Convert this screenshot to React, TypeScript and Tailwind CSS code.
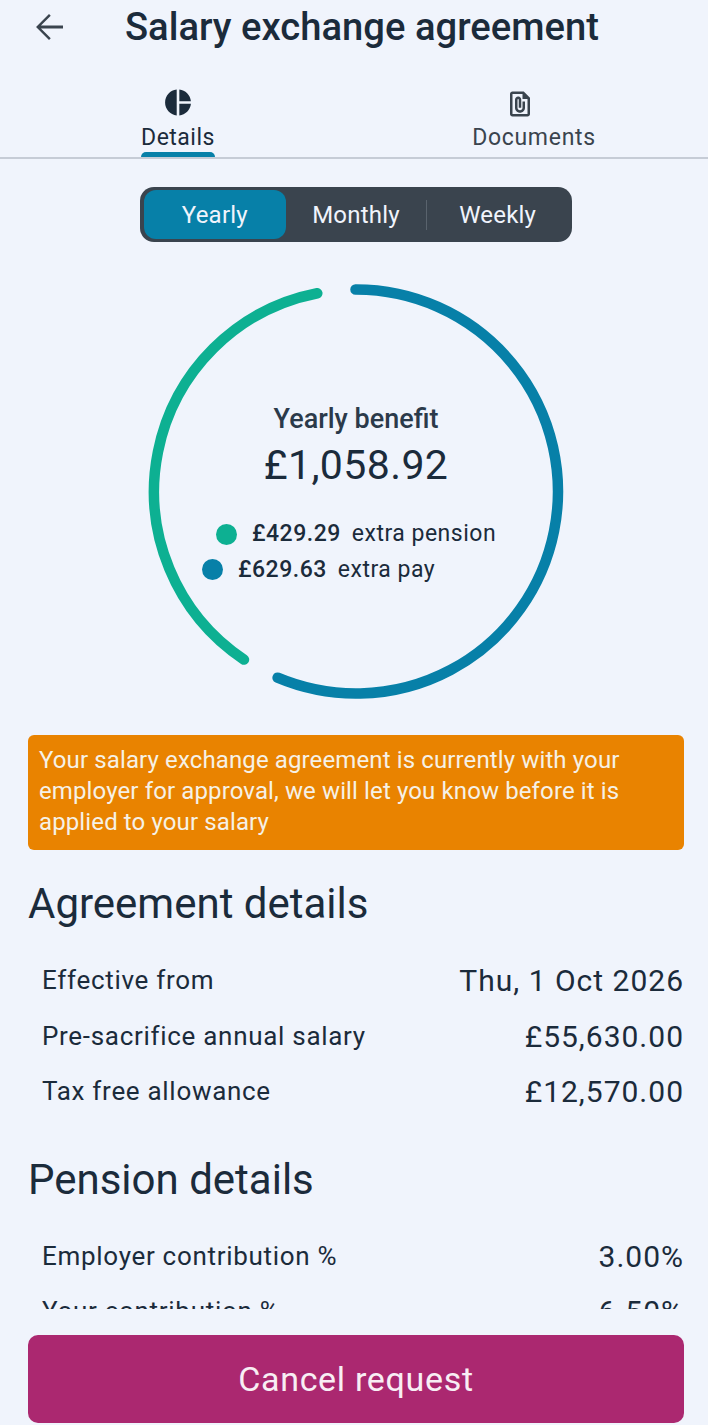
import React from 'react';

const agreementRows = [
  { label: 'Effective from', value: 'Thu, 1 Oct 2026' },
  { label: 'Pre-sacrifice annual salary', value: '£55,630.00' },
  { label: 'Tax free allowance', value: '£12,570.00' },
];

const pensionRows = [
  { label: 'Employer contribution %', value: '3.00%' },
  { label: 'Your contribution %', value: '6.50%' },
  { label: 'Total contribution %', value: '9.50%' },
];

function DetailRow({ label, value }: { label: string; value: string }) {
  return (
    <div className="flex h-[55.5px] items-center justify-between pl-[14px]">
      <span className="text-[26px] tracking-[0.7px] text-[#1b2b3b]">{label}</span>
      <span className="text-[30px] tracking-[1px] text-[#1b2b3b]">{value}</span>
    </div>
  );
}

function BenefitRing() {
  return (
    <svg width="432" height="432" viewBox="0 0 432 432" className="absolute left-0 top-0">
      <path d="M177.29 17.25 A202 202 0 0 0 103.95 383.57" fill="none" stroke="#0db092" strokeWidth="10.5" strokeLinecap="round" />
      <path d="M215.5 13.5 A202 202 0 1 1 137.62 401.69" fill="none" stroke="#0780a8" strokeWidth="10.5" strokeLinecap="round" />
    </svg>
  );
}

export default function App() {
  return (
    <div className="flex h-[1425px] w-[708px] flex-col overflow-hidden bg-[#f0f4fc] font-['Roboto',sans-serif] text-[#1b2b3b]">
      <header className="flex h-[54px] shrink-0 items-center">
        <svg width="42" height="42" viewBox="0 0 24 24" fill="#3a444e" className="ml-[28px]">
          <path d="M20 11.2H7.4l5.6-5.6L12 4.6 4.6 12l7.4 7.4 1-1-5.6-5.6H20v-1.6z" />
        </svg>
        <h1 className="ml-[55px] whitespace-nowrap text-[38.2px] font-medium leading-none">Salary exchange agreement</h1>
      </header>

      <nav className="flex h-[105px] shrink-0 border-b-2 border-[#c6ccd6]">
        <div className="flex w-[356px] shrink-0 flex-col items-center pt-[35px]">
          <svg width="32" height="32" viewBox="0 0 24 24" fill="#1b2b3b" className="-mt-[2px] mb-[5px]">
            <path d="M11 2v20c-5.07-.5-9-4.79-9-10s3.93-9.5 9-10zm2.03 0v8.99H22c-.47-4.74-4.24-8.52-8.97-8.99zm0 11.01V22c4.74-.47 8.5-4.25 8.97-8.99h-8.97z" />
          </svg>
          <span className="text-[23px] leading-[30px] tracking-[0.5px]">Details</span>
          <span className="-mt-[1px] h-[5px] w-[74px] shrink-0 rounded-t-[5px] bg-[#0780a8]" />
        </div>
        <div className="flex w-[356px] shrink-0 flex-col items-center pt-[35px]">
          <svg width="30" height="30" viewBox="0 0 24 24" fill="#3a444e" className="-ml-[29px]">
            <path d="M15 2H6c-1.1 0-2 .9-2 2v16c0 1.1.9 2 2 2h12c1.1 0 2-.9 2-2V7l-5-5zM6 20V4h8v4h4v12H6zm10-10v5c0 2.21-1.79 4-4 4s-4-1.79-4-4V8.5c0-1.47 1.26-2.64 2.76-2.49 1.3.13 2.24 1.32 2.24 2.63V15h-2V8.5c0-.28-.22-.5-.5-.5s-.5.22-.5.5V15c0 1.1.9 2 2 2s2-.9 2-2v-5h2z" />
          </svg>
          <span className="mt-[4px] text-[23px] leading-[30px] tracking-[0.7px] text-[#3a444e]">Documents</span>
        </div>
      </nav>

      <main className="h-[1150px] shrink-0 overflow-hidden pl-[28px] pr-[24px]">
        <div className="ml-[112px] mt-[28px] flex h-[55px] w-[432px] items-center rounded-[14px] bg-[#3a444e] px-[4px] text-[24px] tracking-[0.2px] text-[#f0f4fc]">
          <div className="flex h-[49px] w-[142px] items-center justify-center rounded-[12px] bg-[#0780a8]">Yearly</div>
          <div className="flex w-[141px] items-center justify-center">Monthly</div>
          <div className="h-[30px] w-[1px] bg-[#59636d]" />
          <div className="flex w-[141px] items-center justify-center">Weekly</div>
        </div>

        <div className="relative ml-[112px] mt-[34px] h-[432px] w-[432px]">
          <BenefitRing />
          <div className="relative flex flex-col items-center pt-[126px]">
            <span className="text-[27px] font-medium leading-[34px] text-[#2b3a4a]">Yearly benefit</span>
            <span className="mt-[1px] text-[41px] leading-[56px] tracking-[0.4px]">£1,058.92</span>
          </div>
          <div className="relative mt-[28px] flex flex-col gap-[9.5px] text-[23px] leading-[26px] tracking-[0.5px]">
            <div className="ml-[76px] flex items-center">
              <span className="h-[21px] w-[21px] rounded-full bg-[#0db092]" />
              <span className="ml-[15px] font-medium">£429.29</span>
              <span className="ml-[11px]">extra pension</span>
            </div>
            <div className="ml-[62px] flex items-center">
              <span className="h-[21px] w-[21px] rounded-full bg-[#0780a8]" />
              <span className="ml-[15px] font-medium">£629.63</span>
              <span className="ml-[11px]">extra pay</span>
            </div>
          </div>
        </div>

        <div className="mt-[27px] h-[115px] rounded-[6px] bg-[#e98300] px-[11px] pt-[10px] text-[24px] leading-[31px] tracking-[0.12px] text-[#f6f1e6]">
          Your salary exchange agreement is currently with your employer for approval, we will let you know before it is applied to your salary
        </div>

        <h2 className="mt-[27px] text-[42px] leading-[54px]">Agreement details</h2>
        <div className="mt-[22px]">
          {agreementRows.map((row) => (
            <DetailRow key={row.label} label={row.label} value={row.value} />
          ))}
        </div>

        <h2 className="mt-[33px] text-[42px] leading-[54px]">Pension details</h2>
        <div className="mt-[22px]">
          {pensionRows.map((row) => (
            <DetailRow key={row.label} label={row.label} value={row.value} />
          ))}
        </div>
      </main>

      <div className="px-[24px] pt-[26px]">
        <button className="ml-[4px] flex h-[88px] w-[656px] items-center justify-center rounded-[10px] bg-[#ab2870] text-[34px] tracking-[0.7px] text-[#f8eef4]">
          Cancel request
        </button>
      </div>
    </div>
  );
}
